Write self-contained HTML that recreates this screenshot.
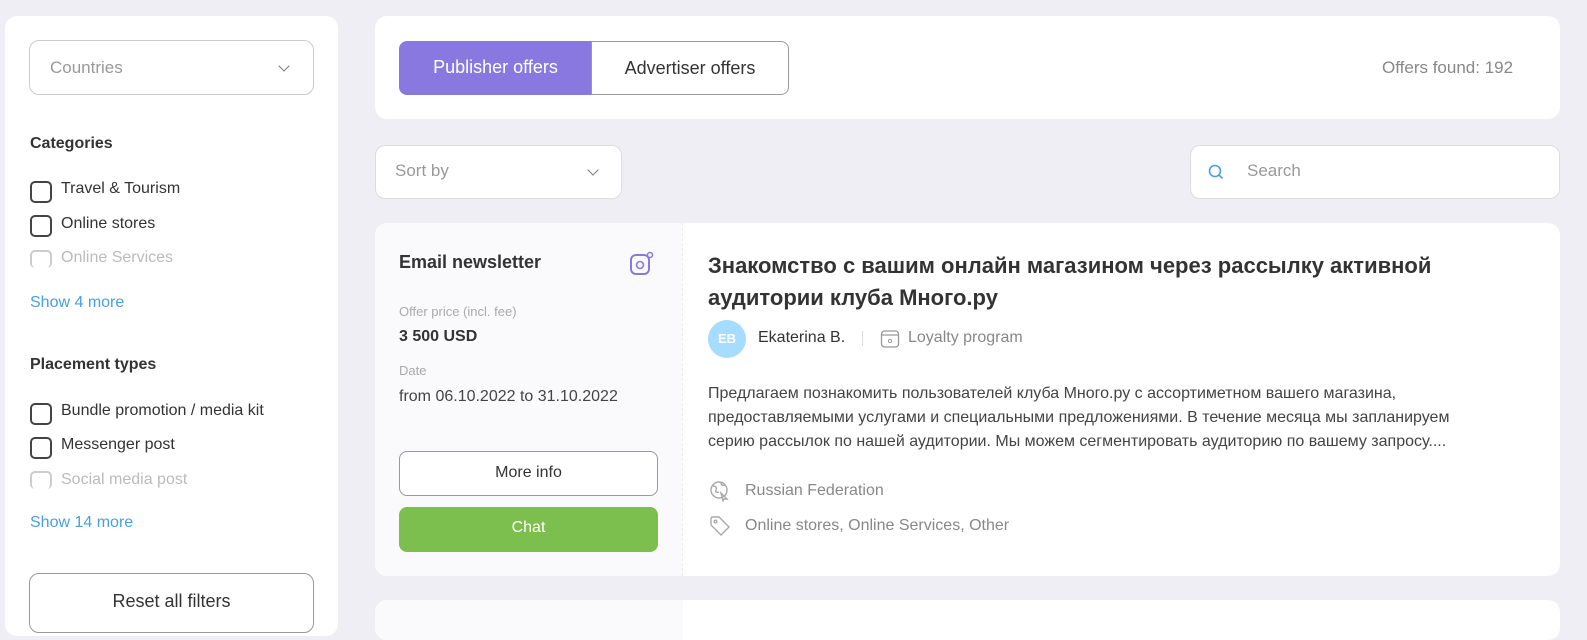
<!DOCTYPE html>
<html><head><meta charset="utf-8"><style>
*{box-sizing:border-box;margin:0;padding:0}
body{width:1587px;height:617px;overflow:hidden;background:#efeef4;font-family:"Liberation Sans",sans-serif;position:relative;color:#333}
.a{position:absolute}
.card{background:#fff;border-radius:12px}
.cb{position:absolute;left:30px;width:22px;height:22px;border:2px solid #444;border-radius:5px}
.lbl{position:absolute;left:61px;font-size:16px;color:#333}
.chev{position:absolute;width:8px;height:8px;border-right:1.5px solid #777;border-bottom:1.5px solid #777;transform:rotate(45deg)}
</style></head><body>
<div class="a card" style="left:5px;top:16px;width:333px;height:620px"></div>
<div class="a" style="left:29px;top:40px;width:285px;height:55px;border:1px solid #ccc;border-radius:10px;background:#fff"></div>
<div class="a" style="left:50px;top:58px;font-size:17px;color:#999">Countries</div>
<div class="chev" style="left:280px;top:62px"></div>
<div class="a" style="left:30px;top:135px;font-size:16px;font-weight:bold;color:#333">Categories</div>
<div class="cb" style="top:181px"></div><div class="lbl" style="top:180px">Travel &amp; Tourism</div>
<div class="cb" style="top:215px"></div><div class="lbl" style="top:215px">Online stores</div>
<div class="cb" style="top:250px;border-color:#ccc;height:18px;border-bottom:none"></div><div class="lbl" style="top:249px;color:#bbb">Online Services</div>
<div class="a" style="left:30px;top:294px;font-size:16px;color:#4a9fe0">Show 4 more</div>
<div class="a" style="left:30px;top:356px;font-size:16px;font-weight:bold;color:#333">Placement types</div>
<div class="cb" style="top:403px"></div><div class="lbl" style="top:402px">Bundle promotion / media kit</div>
<div class="cb" style="top:437px"></div><div class="lbl" style="top:436px">Messenger post</div>
<div class="cb" style="top:471px;border-color:#ccc;height:18px;border-bottom:none"></div><div class="lbl" style="top:471px;color:#bbb">Social media post</div>
<div class="a" style="left:30px;top:514px;font-size:16px;color:#4a9fe0">Show 14 more</div>
<div class="a" style="left:29px;top:573px;width:285px;height:60px;border:1px solid #999;border-radius:10px;background:#fff;text-align:center;padding-top:17px;font-size:18px;color:#333">Reset all filters</div>

<div class="a card" style="left:375px;top:16px;width:1185px;height:103px"></div>
<div class="a" style="left:399px;top:41px;width:193px;height:54px;background:#8878e0;border-radius:8px 0 0 8px;color:#fff;font-size:18px;text-align:center;padding-top:16px">Publisher offers</div>
<div class="a" style="left:591px;top:41px;width:198px;height:54px;border:1px solid #999;border-radius:0 8px 8px 0;background:#fff;color:#333;font-size:18px;text-align:center;padding-top:16px">Advertiser offers</div>
<div class="a" style="left:1382px;top:58px;font-size:17px;color:#888">Offers found: 192</div>

<div class="a" style="left:375px;top:145px;width:247px;height:54px;background:#fff;border:1px solid #ddd;border-radius:10px"></div>
<div class="a" style="left:395px;top:161px;font-size:17px;color:#999">Sort by</div>
<div class="chev" style="left:589px;top:166px"></div>
<div class="a" style="left:1190px;top:145px;width:370px;height:54px;background:#fff;border:1px solid #ddd;border-radius:10px"></div>
<svg class="a" style="left:1207px;top:163px" width="18" height="18" viewBox="0 0 18 18"><circle cx="8" cy="8" r="5.5" fill="none" stroke="#4a9fe0" stroke-width="1.6"/><path d="M12 12l3.5 3.5" stroke="#4a9fe0" stroke-width="1.6"/></svg>
<div class="a" style="left:1247px;top:161px;font-size:17px;color:#999">Search</div>

<div class="a card" style="left:375px;top:223px;width:1185px;height:353px;overflow:hidden">
<div class="a" style="left:0;top:0;width:308px;height:353px;background:#fafafd;border-right:1px dashed #eee"></div>
</div>
<div class="a" style="left:399px;top:252px;font-size:18px;font-weight:bold;color:#333">Email newsletter</div>
<svg class="a" style="left:629px;top:251px" width="26" height="26" viewBox="0 0 26 26"><rect x="2" y="4" width="18" height="19" rx="5" fill="none" stroke="#8878e0" stroke-width="2"/><circle cx="11" cy="14" r="3.5" fill="none" stroke="#8878e0" stroke-width="1.6"/><circle cx="21" cy="4" r="2.5" fill="#fff" stroke="#8878e0" stroke-width="1.5"/></svg>
<div class="a" style="left:399px;top:304px;font-size:13px;color:#aaa">Offer price (incl. fee)</div>
<div class="a" style="left:399px;top:328px;font-size:16px;font-weight:bold;color:#333">3 500 USD</div>
<div class="a" style="left:399px;top:363px;font-size:13px;color:#aaa">Date</div>
<div class="a" style="left:399px;top:388px;font-size:16px;color:#444">from 06.10.2022 to 31.10.2022</div>
<div class="a" style="left:399px;top:451px;width:259px;height:45px;border:1px solid #999;border-radius:8px;background:#fff;text-align:center;padding-top:12px;font-size:16px;color:#333">More info</div>
<div class="a" style="left:399px;top:507px;width:259px;height:45px;border-radius:8px;background:#7dbf4e;text-align:center;padding-top:12px;font-size:16px;color:#fff">Chat</div>

<div class="a" style="left:708px;top:250px;width:830px;font-size:22px;font-weight:bold;color:#333;line-height:32px">Знакомство с вашим онлайн магазином через рассылку активной аудитории клуба Много.ру</div>
<div class="a" style="left:708px;top:320px;width:38px;height:38px;border-radius:50%;background:#a6dcff;color:#fff;font-size:13px;font-weight:bold;text-align:center;line-height:38px">EB</div>
<div class="a" style="left:758px;top:329px;font-size:16px;color:#333">Ekaterina B.</div>
<div class="a" style="left:862px;top:331px;width:1px;height:15px;background:#ddd"></div>
<svg class="a" style="left:880px;top:329px" width="20" height="20" viewBox="0 0 20 20"><rect x="1.5" y="2" width="17" height="16" rx="3" fill="none" stroke="#999" stroke-width="1.3"/><path d="M1.5 6h17" stroke="#999" stroke-width="1.3"/><circle cx="10" cy="12" r="1.6" fill="none" stroke="#999"/></svg>
<div class="a" style="left:908px;top:329px;font-size:16px;color:#888">Loyalty program</div>
<div class="a" style="left:708px;top:382px;width:770px;font-size:16px;color:#444;line-height:24px">Предлагаем познакомить пользователей клуба Много.ру с ассортиметном вашего магазина, предоставляемыми услугами и специальными предложениями. В течение месяца мы запланируем серию рассылок по нашей аудитории. Мы можем сегментировать аудиторию по вашему запросу....</div>
<svg class="a" style="left:709px;top:480px" width="22" height="22" viewBox="0 0 22 22" fill="none" stroke="#aaa" stroke-width="1.4"><circle cx="10" cy="10" r="8"/><path d="M4 6c3 0 4 2 3 4s1 3 3 2M12 3c0 2 2 3 4 2M12 13l6 6-3 0-1 2z"/></svg>
<div class="a" style="left:745px;top:482px;font-size:16px;color:#888">Russian Federation</div>
<svg class="a" style="left:709px;top:515px" width="22" height="22" viewBox="0 0 22 22" fill="none" stroke="#aaa" stroke-width="1.4"><path d="M2 3v7l10 10 8-8L10 2H3z"/><circle cx="6.5" cy="6.5" r="1.3"/></svg>
<div class="a" style="left:745px;top:517px;font-size:16px;color:#888">Online stores, Online Services, Other</div>

<div class="a card" style="left:375px;top:600px;width:1185px;height:40px;overflow:hidden"><div class="a" style="left:0;top:0;width:308px;height:40px;background:#fafafd"></div></div>
</body></html>
